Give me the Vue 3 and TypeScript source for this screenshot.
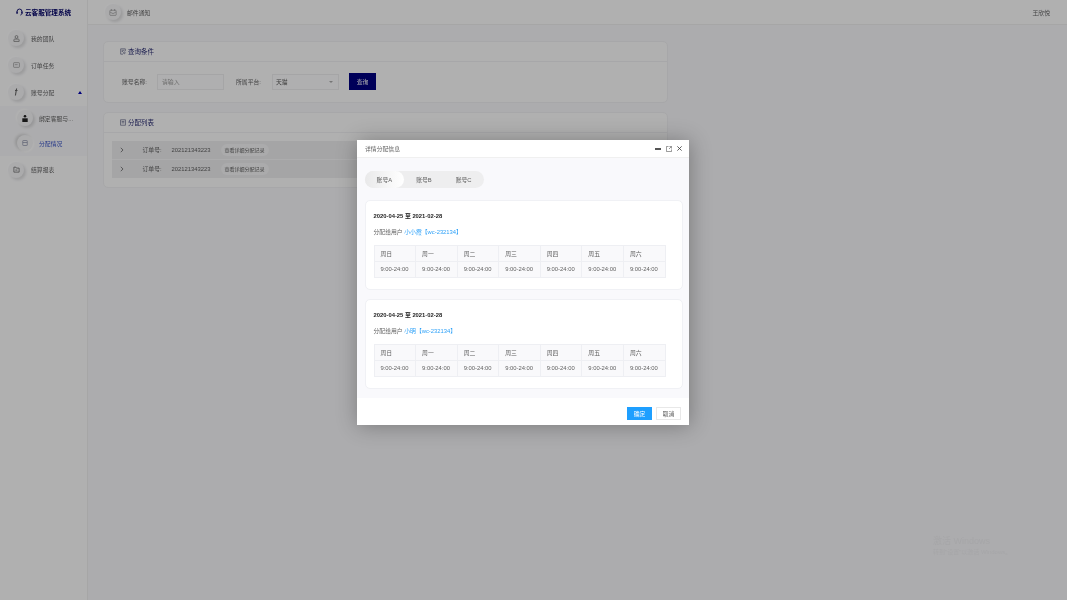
<script setup lang="ts">
interface Assign {
  range: string
  user: string
}

const menus = [
  { label: '我的团队', icon: 'team' },
  { label: '订单任务', icon: 'order' },
  { label: '账号分配', icon: 'account', open: true }
]
const orders = ['202121343223', '202121343223']
const tabs = ['账号A', '账号B', '账号C']
const days = ['周日', '周一', '周二', '周三', '周四', '周五', '周六']
const assigns: Assign[] = [
  { range: '2020-04-25 至 2021-02-28', user: '小小霞【wc-232134】' },
  { range: '2020-04-25 至 2021-02-28', user: '小明【wc-232134】' }
]
</script>

<template>
  <div class="page">
    <aside class="side">
      <div class="logo">
        <svg width="7" height="8" viewBox="0 0 10 11" fill="none" stroke="#000066" stroke-width="1.3">
          <path d="M1.500 6V4.800a3.500 3.500 0 0 1 7 0V6" />
          <rect x="0.500" y="5" width="2" height="3" fill="#000066" stroke="none" />
          <rect x="7.500" y="5" width="2" height="3" fill="#000066" stroke="none" />
          <path d="M8.400 8c0 1-1 1.800-2.400 1.800" stroke-width="1" />
        </svg>
        <span>云客服管理系统</span>
      </div>
      <div v-for="m in menus" :key="m.label" class="menu">
        <span class="ball">
          <svg v-if="m.icon === 'team'" width="7" height="7" viewBox="0 0 12 12" fill="none" stroke="#808080" stroke-width="1.400">
            <circle cx="6" cy="3.400" r="2.400" />
            <path d="M1.500 11V8.400c0-.8.600-1.400 1.400-1.400h6.200c.8 0 1.400.6 1.400 1.400V11z" />
          </svg>
          <svg v-else-if="m.icon === 'order'" width="7" height="6" viewBox="0 0 12 10" fill="none" stroke="#999" stroke-width="1.300">
            <rect x="1" y="1" width="10" height="8" rx="1" />
            <path d="M3 4.500h5" />
          </svg>
          <svg v-else width="4" height="8" viewBox="0 0 4 8" fill="none" stroke="#666" stroke-width="1.100">
            <path d="M2.600.5 1.400 7.500M1 2.500h2.500" />
          </svg>
        </span>
        <span class="menu-label">{{ m.label }}</span>
        <i v-if="m.open" class="caret"></i>
      </div>
      <div class="sub">
        <div class="sub-item">
          <span class="ball">
            <svg width="6" height="7" viewBox="0 0 6 7" fill="#222">
              <circle cx="3" cy="1.300" r="1.300" />
              <path d="M.3 7V3.300h5.400V7z" />
            </svg>
          </span>
          <span class="sub-label">绑定客服与...</span>
        </div>
        <div class="sub-item active">
          <span class="ball">
            <svg width="6" height="6" viewBox="0 0 12 12" fill="none" stroke="#8a8fa8" stroke-width="1.400">
              <rect x="1.500" y="1" width="9" height="10" rx="1" />
              <path d="M1.500 5h9" />
            </svg>
          </span>
          <span class="sub-label">分配情况</span>
        </div>
      </div>
      <div class="menu">
        <span class="ball">
          <svg width="7" height="7" viewBox="0 0 12 12" fill="none" stroke="#666" stroke-width="1.300">
            <path d="M1.500 10.500V2h3.400l1 1.600h4.600v6.900z" />
            <path d="M4 7h3.500" />
          </svg>
        </span>
        <span class="menu-label">结算报表</span>
      </div>
    </aside>

    <div class="main">
      <header class="top">
        <span class="ball">
          <svg width="8" height="7" viewBox="0 0 12 11" fill="none" stroke="#999" stroke-width="1.100">
            <rect x="1" y="2" width="10" height="8" rx="1" />
            <path d="M1.500 5 6 7.200 10.500 5M3.500 0v3M8.500 0v3" />
          </svg>
        </span>
        <span class="mail">邮件通知</span>
        <span class="who">王欣悦</span>
      </header>

      <div class="content">
        <section class="card">
          <h3 class="card-title">
            <svg width="6" height="7" viewBox="0 0 9 10" fill="none" stroke="#6a6d8c" stroke-width="1.100">
              <path d="M8 4.500V1H1v8h3.500" />
              <path d="M2.500 3.200h4M2.500 5h2" />
              <circle cx="6.500" cy="7" r="1.300" />
            </svg>
            查询条件
          </h3>
          <div class="query">
            <label>账号名称:</label>
            <span class="input ph">请输入</span>
            <label class="second">所属平台:</label>
            <span class="input select">天猫<i class="down"></i></span>
            <button class="btn-query" type="button">查询</button>
          </div>
        </section>

        <section class="card">
          <h3 class="card-title">
            <svg width="6" height="7" viewBox="0 0 9 10" fill="none" stroke="#6a6d8c" stroke-width="1.100">
              <rect x="1" y="1" width="7" height="8" />
              <path d="M2.500 3.500h4M2.500 5.500h4" />
            </svg>
            分配列表
          </h3>
          <div class="orders">
            <div v-for="(o, i) in orders" :key="i" class="order">
              <svg class="arrow" width="4" height="6" viewBox="0 0 5 7" fill="none" stroke="#666" stroke-width="1">
                <path d="m1 .8 2.800 2.700L1 6.200" />
              </svg>
              <span class="no-label">订单号:</span>
              <span class="no">{{ o }}</span>
              <span class="pill">查看详细分配记录</span>
            </div>
          </div>
        </section>
      </div>
    </div>

    <div class="mask"></div>
    <div class="watermark">
      <div class="wm-a">激活 Windows</div>
      <div class="wm-b">转到"设置"以激活 Windows。</div>
    </div>

    <div class="dialog">
      <div class="dlg-head">
        <span>详情分配信息</span>
        <div class="dlg-tools">
          <i class="line"></i>
          <svg width="6" height="6" viewBox="0 0 7 7" fill="none" stroke="#777" stroke-width="0.900">
            <path d="M3 .5H.5v6h6V4M4 .5h2.500V3M6.300.7 3.500 3.500" />
          </svg>
          <svg width="5" height="5" viewBox="0 0 7 7" fill="none" stroke="#444" stroke-width="1.200">
            <path d="m.5.5 6 6M6.500.5l-6 6" />
          </svg>
        </div>
      </div>
      <div class="dlg-body">
        <div class="tabs">
          <span v-for="(t, i) in tabs" :key="t" class="tab" :class="{ on: i === 0 }">{{ t }}</span>
        </div>
        <div v-for="(a, i) in assigns" :key="i" class="box">
          <div class="range">{{ a.range }}</div>
          <div class="user">分配给用户 <span>{{ a.user }}</span></div>
          <table>
            <thead>
              <tr><th v-for="d in days" :key="d">{{ d }}</th></tr>
            </thead>
            <tbody>
              <tr><td v-for="d in days" :key="d">9:00-24:00</td></tr>
            </tbody>
          </table>
        </div>
      </div>
      <div class="dlg-foot">
        <button class="ok" type="button">确定</button>
        <button class="cancel" type="button">取消</button>
      </div>
    </div>
  </div>
</template>

<style>
body {
  margin: 0;
}
</style>

<style scoped>
.page {
  position: relative;
  display: flex;
  width: 1067px;
  height: 600px;
  overflow: hidden;
  background: #f6f6f9;
  font-family: "Liberation Sans", "Noto Sans CJK SC", sans-serif;
  font-size: 5.830px;
  color: #5f5f5f;
  filter: blur(0.3px);
}
.side {
  box-sizing: border-box;
  width: 88px;
  flex: none;
  background: #fcfcfd;
  border-right: 1px solid #eee;
}
.logo {
  display: flex;
  align-items: center;
  gap: 2px;
  height: 24.500px;
  padding-left: 16px;
  font-size: 6.600px;
  font-weight: 700;
  color: #000066;
}
.ball {
  display: flex;
  align-items: center;
  justify-content: center;
  width: 16px;
  height: 16px;
  flex: none;
  border-radius: 50%;
  background: #f5f5f7;
  box-shadow: 2px 2px 3px rgba(0, 0, 0, 0.12), -1px -1px 2px #fff;
}
.menu {
  display: flex;
  align-items: center;
  height: 27px;
  padding-left: 8px;
}
.menu-label {
  margin-left: 7px;
}
.caret {
  margin-left: 24px;
  border: 2.500px solid transparent;
  border-top: 0;
  border-bottom: 3px solid #0000b0;
}
.sub {
  background: #f7f7f9;
}
.sub-item {
  display: flex;
  align-items: center;
  height: 25.250px;
  padding-left: 16.500px;
}
.sub-label {
  margin-left: 6.500px;
}
.active .ball {
  box-shadow: -2px -1px 3px rgba(0, 0, 0, 0.14), 1px 1px 2px #fff;
}
.active .sub-label {
  color: #3651c4;
}
.main {
  flex: 1;
  min-width: 0;
}
.top {
  box-sizing: border-box;
  display: flex;
  align-items: center;
  height: 25px;
  padding: 0 17px;
  background: #fcfcfd;
  border-bottom: 1px solid #eee;
}
.mail {
  margin-left: 6px;
}
.who {
  margin-left: auto;
}
.content {
  display: flex;
  flex-direction: column;
  gap: 9px;
  width: 565px;
  padding: 15.500px 0 0 15px;
}
.card {
  background: #fcfcfd;
  border: 1px solid #f0f0f2;
  border-radius: 5px;
}
.card-title {
  box-sizing: border-box;
  display: flex;
  align-items: center;
  gap: 2px;
  height: 20px;
  margin: 0;
  padding-left: 16px;
  border-bottom: 1px solid #f0f0f2;
  font-size: 6.500px;
  font-weight: 400;
  color: #2b2e73;
}
.query {
  display: flex;
  align-items: center;
  height: 40px;
  padding-left: 18px;
}
.query label {
  width: 35px;
  flex: none;
}
.input {
  display: flex;
  align-items: center;
  box-sizing: border-box;
  width: 67px;
  height: 16px;
  padding-left: 4px;
  border: 1px solid #ececee;
  background: #fbfbfc;
}
.ph {
  color: #999;
}
.query .second {
  margin-left: 12px;
  width: 36px;
}
.select {
  position: relative;
  padding-left: 3px;
  color: #555;
}
.down {
  position: absolute;
  right: 5px;
  top: 6px;
  border: 2px solid transparent;
  border-top: 2px solid #aaa;
  border-bottom: 0;
}
.btn-query {
  width: 27px;
  height: 16.500px;
  margin-left: 10px;
  padding: 0;
  border: 0;
  background: #000080;
  color: #fff;
  font: inherit;
}
.orders {
  margin: 8.500px 8px;
  background: #ececee;
}
.order {
  display: flex;
  align-items: center;
  height: 18px;
  line-height: 8px;
  border-bottom: 1px solid #f7f7f8;
}
.order:last-child {
  border-bottom: 0;
}
.arrow {
  margin-left: 7.500px;
}
.no-label {
  width: 29px;
  margin-left: 19px;
}
.no {
  width: 39px;
}
.pill {
  margin-left: 10px;
  padding: 0 4px;
  line-height: 12px;
  border-radius: 6px;
  background: #f5f5f6;
  font-size: 5px;
}
.mask {
  position: absolute;
  inset: 0;
  background: rgba(0, 0, 0, 0.3);
}
.watermark {
  position: absolute;
  left: 933px;
  top: 536px;
  color: #a6a6a8;
}
.wm-a {
  font-size: 9px;
  line-height: 11px;
}
.wm-b {
  font-size: 6px;
  line-height: 10px;
}
.dialog {
  position: absolute;
  left: 357px;
  top: 140px;
  width: 332px;
  height: 285px;
  display: flex;
  flex-direction: column;
  background: #fff;
  box-shadow: 1px 1px 20px rgba(0, 0, 0, 0.3);
}
.dlg-head {
  box-sizing: border-box;
  display: flex;
  align-items: center;
  justify-content: space-between;
  height: 18px;
  padding: 0 7px 0 8px;
  border-bottom: 1px solid #f0f0f0;
  flex: none;
}
.dlg-tools {
  display: flex;
  align-items: center;
  gap: 5px;
}
.line {
  width: 6px;
  height: 2px;
  background: #555;
}
.dlg-body {
  height: 240px;
  box-sizing: border-box;
  padding: 13px 6px 0 8px;
  background: #f9f9fc;
  flex: none;
}
.tabs {
  display: flex;
  width: 119px;
  height: 17px;
  margin-left: -0.500px;
  border-radius: 9px;
  background: #eeeeef;
}
.tab {
  display: flex;
  align-items: center;
  justify-content: center;
  width: 39.670px;
  border-radius: 9px;
}
.tab.on {
  background: linear-gradient(90deg, #e9e9ea, #fff);
}
.box {
  box-sizing: border-box;
  height: 90px;
  margin-top: 12px;
  padding: 10px 0 0 7.500px;
  background: #fff;
  border: 1px solid #f0f1f5;
  border-radius: 5px;
}
.box + .box {
  margin-top: 9px;
}
.range {
  font-weight: 700;
  line-height: 11px;
  color: #222;
}
.user {
  margin-top: 5px;
  line-height: 11px;
}
.user span {
  color: #2ea1f8;
}
table {
  margin-top: 6.500px;
  border-collapse: collapse;
  table-layout: fixed;
  width: 292px;
  background: #f9f9fb;
}
th,
td {
  height: 15px;
  padding: 0 0 0 6px;
  border: 1px solid #eeeff3;
  text-align: left;
  font-weight: 400;
  color: #5f5f5f;
}
.dlg-foot {
  display: flex;
  align-items: flex-end;
  justify-content: flex-end;
  gap: 4px;
  flex: 1;
  padding: 0 8px 5px 0;
}
.dlg-foot button {
  width: 25px;
  height: 13px;
  padding: 0;
  font: inherit;
}
.ok {
  border: 0;
  background: #1e9fff;
  color: #fff;
}
.cancel {
  border: 1px solid #e8e8e8;
  background: #fff;
  color: #555;
}
</style>
